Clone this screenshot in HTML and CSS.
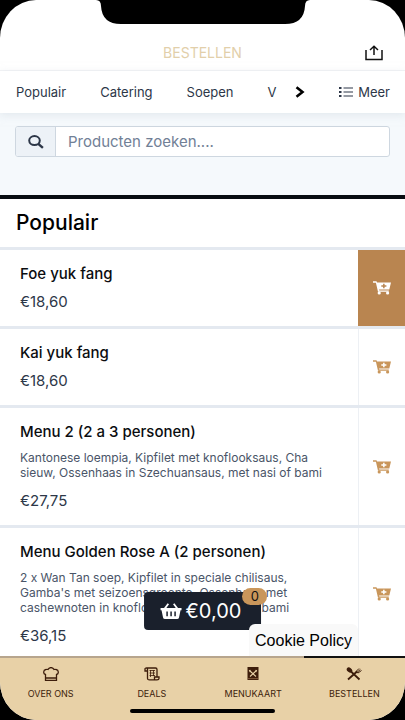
FILE: index.html
```html
<!DOCTYPE html>
<html lang="nl">
<head>
<meta charset="utf-8">
<meta name="viewport" content="width=device-width, initial-scale=1">
<title>Bestellen</title>
<link rel="stylesheet" href="styles.css">
</head>
<body>
<svg class="defs" aria-hidden="true">
  <symbol id="cart" viewBox="0 0 18 14">
    <path fill="currentColor" fill-rule="evenodd" d="M0 .3h3.500l.5 1.300H18l-1.700 6.800H6l.3 1.100h9.500v1.300H5L2.900 1.700H0zM10.100 2.800v1.500H8.300v1.500h1.800v1.500h1.500V5.800h1.800V4.300h-1.800V2.800z"/>
    <circle cx="6.200" cy="12" r="1.600" fill="currentColor"/><circle cx="14.600" cy="12" r="1.600" fill="currentColor"/>
  </symbol>
</svg>
<div class="screen">
  <header class="topbar">
    <h1>BESTELLEN</h1>
    <button class="share" aria-label="Delen">
      <svg width="18" height="16" viewBox="0 0 18 16" fill="none" stroke="currentColor" stroke-width="1.500"><path d="M1 5v9.500h16V5M9 10V1.500M5 5l4-3.700L13 5"/></svg>
    </button>
  </header>
  <nav class="tabs" aria-label="Categorieën">
    <div class="tab-list">
      <a href="#populair">Populair</a><a href="#catering">Catering</a><a href="#soepen">Soepen</a><a href="#v">V</a>
    </div>
    <button class="next" aria-label="Volgende"><svg width="10" height="12" viewBox="0 0 10 12" fill="none" stroke="currentColor" stroke-width="2.600"><path d="M1.500 1.200 7.500 6l-6 4.800"/></svg></button>
    <button class="more"><svg width="14" height="10" viewBox="0 0 14 10" fill="currentColor"><path d="M0 0h2.500v2H0zM0 4h2.500v2H0zM0 8h2.500v2H0zM4.500.4H14v1.200H4.500zM4.500 4.400H14v1.200H4.500zM4.500 8.400H14v1.200H4.500z"/></svg>Meer</button>
  </nav>
  <form class="search">
    <div class="search-box">
      <label for="q" aria-label="Zoeken"><svg width="16" height="14" viewBox="0 0 16 14" fill="none" stroke="currentColor"><ellipse cx="6.500" cy="5.600" rx="5.300" ry="4.500" stroke-width="2"/><path d="m10.300 8.800 4.600 4.100" stroke-width="2.400"/></svg></label>
      <input id="q" type="search" placeholder="Producten zoeken....">
    </div>
  </form>
  <main class="menu">
    <h2 id="populair">Populair</h2>
    <article class="item">
      <div class="info"><h3>Foe yuk fang</h3><p class="price">€18,60</p></div>
      <button class="add active" aria-label="Toevoegen"><svg width="18" height="14"><use href="#cart"/></svg></button>
    </article>
    <article class="item">
      <div class="info"><h3>Kai yuk fang</h3><p class="price">€18,60</p></div>
      <button class="add" aria-label="Toevoegen"><svg width="18" height="14"><use href="#cart"/></svg></button>
    </article>
    <article class="item">
      <div class="info"><h3>Menu 2 (2 a 3 personen)</h3><p class="desc">Kantonese loempia, Kipfilet met knoflooksaus, Cha<br>sieuw, Ossenhaas in Szechuansaus, met nasi of bami</p><p class="price">€27,75</p></div>
      <button class="add" aria-label="Toevoegen"><svg width="18" height="14"><use href="#cart"/></svg></button>
    </article>
    <article class="item">
      <div class="info"><h3>Menu Golden Rose A (2 personen)</h3><p class="desc">2 x Wan Tan soep, Kipfilet in speciale chilisaus,<br>Gamba's met seizoensgroente, Ossenhaas met<br>cashewnoten in knoflooksaus, met nasi of bami</p><p class="price">€36,15</p></div>
      <button class="add" aria-label="Toevoegen"><svg width="18" height="14"><use href="#cart"/></svg></button>
    </article>
  </main>
  <footer class="dock">
    <button class="basket">
      <svg width="22" height="16" viewBox="0 0 22 16"><path fill="currentColor" fill-rule="evenodd" d="M7.600.3 9 1.200 6.300 5h9.400L13 1.200l1.400-.9L18 5h3.500v2.300h-1L19 14.500q-.3 1.500-2 1.500H5q-1.700 0-2-1.500L1.500 7.300h-1V5H4zM6.300 8.500v4.700h1.500V8.500zm4 0v4.700h1.500V8.500zm4 0v4.700h1.500V8.500z"/></svg>
      €0,00<span class="badge">0</span>
    </button>
    <a class="cookie" href="#cookies">Cookie Policy</a>
    <nav class="bottom" aria-label="Hoofdmenu">
      <a href="#over"><svg width="16" height="14" viewBox="0 0 16 14" fill="none" stroke="currentColor"><path d="M2.500 7.500C0 7 0 3 3 2.500q1-.4 2 0Q6 .6 8 .6t3 1.900q1-.4 2 0c3 .5 3 4.500.5 5v5.800h-11zM2.500 11h11" stroke-width="1.300"/></svg>OVER ONS</a>
      <a href="#deals"><svg width="16" height="14" viewBox="0 0 16 14" fill="none" stroke="currentColor" stroke-width="1.300"><path d="M3.500 4H1V1.800Q1 1 2.500 1h9Q13 1 13 2.500V10h2v1.500q0 1.400-2 1.400H5.500q-2 0-2-1.500V2.500Q3.500 1 2.500 1M13 10h-2.500v2.500"/><path d="M5.500 3.500h5.500M5.500 6h5.500M5.500 8.500h5.500M6.500 3v7M9.500 3v6" stroke-width=".8"/></svg>DEALS</a>
      <a href="#menukaart"><svg width="12" height="14" viewBox="0 0 12 14"><path fill="currentColor" d="M.5 0h11v13H.5z"/><path d="m3 4 6 5.500M9 4 3 9.500" stroke="#e8d1a7" stroke-width="1.100"/><path d="m2.500 3 1 2M9.500 3l-1 2" stroke="#e8d1a7" stroke-width="1.600"/><path d="M1 11.600h10" stroke="#9b714c" stroke-width=".7"/></svg>MENUKAART</a>
      <a class="current" href="#bestellen" aria-current="page"><svg width="16" height="14" viewBox="0 0 16 14" fill="none" stroke="currentColor"><ellipse cx="3.500" cy="3" rx="3" ry="2.200" transform="rotate(35 3.500 3)" fill="currentColor" stroke="none"/><path d="m5 4.500 8.500 8M2 12.500l9-8" stroke-width="1.800"/><path d="m10 4.500 3-3M11 5.400l3.400-3M12 6l3.500-2.500M10 4.500 12 6" stroke-width="1"/></svg>BESTELLEN</a>
    </nav>
    <span class="home-bar"></span>
  </footer>
  <svg class="notch" width="214" height="24" viewBox="0 0 214 24" aria-hidden="true"><path d="M0 0q5 0 5 6 1 18 20 18h164q19 0 20-18 0-6 5-6z"/></svg>
</div>
</body>
</html>
```
FILE: styles.css
```css
* { box-sizing: border-box; }
body, h1, h2, h3, p { margin: 0; }
body { background: #000; color: #2d3748; font-family: Inter, "Liberation Sans", sans-serif; font-size: 13px; }
a { color: inherit; text-decoration: none; }
button { border: 0; padding: 0; background: none; color: inherit; font: inherit; }
svg { flex: none; }
.defs { position: absolute; width: 0; height: 0; }

.screen { position: relative; display: flex; flex-direction: column; height: 100vh; overflow: hidden; border-radius: 36px / 38px; background: #fff; }
.notch { position: absolute; top: 0; left: 50%; margin-left: -107px; }

.topbar { display: grid; grid-template-columns: 1fr auto 1fr; align-items: end; padding: 42px 22px 6px; border-bottom: 1px solid #f3f4f6; }
.topbar h1 { grid-column: 2; color: #e2cfaa; font-size: 14px; line-height: 22px; font-weight: 400; }
.share { justify-self: end; display: flex; padding-bottom: 3px; color: #111; }

.tabs { position: relative; display: flex; align-items: center; height: 42px; padding: 0 15px 0 16px; background: #fff; box-shadow: 0 2px 8px #cfd8e080; }
.tab-list { display: flex; gap: 34px; flex: 1; overflow: hidden; }
.next { display: flex; color: #000; padding: 0 34px 0 16px; }
.more { display: flex; align-items: center; gap: 5px; }

.search { padding: 13px 15px 38px; background: #f5f9fc; border-bottom: 4px solid #080d12; }
.search-box { display: flex; height: 31px; border: 1px solid #ced7e0; border-radius: 3px; background: #fff; overflow: hidden; }
.search-box label { display: flex; align-items: center; justify-content: center; width: 40px; background: #edf2f7; border-right: 1px solid #ced7e0; color: #2d3748; }
.search-box input { flex: 1; min-width: 0; border: 0; padding: 0 12px; background: none; font: inherit; font-size: 15px; outline: 0; }
.search-box input::placeholder { color: #718096; }

.menu { display: flex; flex-direction: column; gap: 3px; flex: 1; min-height: 0; overflow: hidden; background: #e4e9f0; }
.menu h2 { padding: 10px 16px; background: #fff; color: #000; font-size: 21px; line-height: 28px; font-weight: 500; }
.item { display: flex; flex: none; background: #fff; }
.info { flex: 1; padding: 14px 20px; }
.info h3 { color: #0b0d10; font-size: 15px; line-height: 20px; font-weight: 500; }
.desc { margin-top: 8px; padding-bottom: 3px; color: #4a5568; font-size: 12px; line-height: 15px; }
.price { margin-top: 8px; font-size: 15px; line-height: 20px; }
.add { display: flex; align-items: center; justify-content: center; width: 47px; border-left: 1px solid #edf0f4; color: #c9965b; }
.add.active { border-color: #b98550; background: #b98550; color: #fff; }

.dock { position: relative; }
.basket { position: absolute; bottom: 90px; left: 50%; transform: translateX(-50%); display: flex; align-items: center; gap: 4px; height: 38px; padding: 0 16px; border-radius: 4px; background: #1a202c; color: #fff; font-size: 20px; }
.badge { position: absolute; top: -4px; right: -6px; width: 25px; border-radius: 9px; background: #c9965b; color: #111; font-size: 13px; line-height: 17px; text-align: center; }
.cookie { position: absolute; right: 47px; bottom: 64px; padding: 5px 6px 4px; border-radius: 6px 6px 0 0; background: #f9f9f9; color: #000; font: 16px/23px "Liberation Sans", sans-serif; }
.bottom { display: grid; grid-template-columns: repeat(4, 1fr); height: 64px; background: #e8d1a7; color: #3d1d0b; font-size: 9px; line-height: 12px; }
.bottom a { display: flex; flex-direction: column; align-items: center; gap: 7px; padding-top: 9px; border-top: 2px solid #b7a58d; }
.bottom .current { border-color: #111; }
.home-bar { position: absolute; bottom: 7px; left: 50%; width: 145px; height: 4px; margin-left: -73px; border-radius: 2px; background: #000; }
```
